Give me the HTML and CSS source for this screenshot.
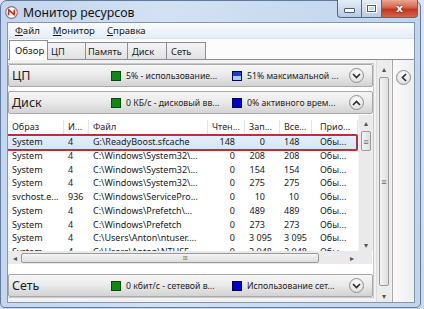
FILE: index.html
```html
<!DOCTYPE html>
<html lang="ru">
<head>
  <meta charset="UTF-8">
  <title>Монитор ресурсов</title>
  <link rel="stylesheet" href="styles.css">
</head>
<body>
  <div class="window">
    <div class="titlebar">
      <span class="app-icon">
        <svg width="13" height="13" viewBox="0 0 13 13">
          <circle cx="6.5" cy="6.5" r="5.8" fill="#fff" stroke="#7b7b7b" stroke-width="1.2"/>
          <path d="M3.4 9.2 L3.8 4 L9 8.6 L9.4 3.6" fill="none" stroke="#d02a20" stroke-width="1.6"/>
        </svg>
      </span>
      <span class="title">Монитор ресурсов</span>
      <div class="caption-btns">
        <span class="cap cap-min"><i></i></span>
        <span class="cap cap-max"><i></i></span>
        <span class="cap cap-close">x</span>
      </div>
    </div>

    <div class="client">
      <div class="menubar">
        <span><u>Ф</u>айл</span>
        <span><u>М</u>онитор</span>
        <span><u>С</u>правка</span>
      </div>

      <div class="tabs">
        <span class="tab active">Обзор</span>
        <span class="tab">ЦП</span>
        <span class="tab">Память</span>
        <span class="tab">Диск</span>
        <span class="tab">Сеть</span>
      </div>

      <div class="pane">
        <div class="main">
          <div class="section-head">
            <span class="sec-title">ЦП</span>
            <span class="ind"><i class="sq green"></i>5% - использование...</span>
            <span class="ind"><i class="sq blue half"></i>51% максимальной ...</span>
            <span class="round-btn"><svg width="9" height="6" viewBox="0 0 9 6"><path d="M1 1 L4.5 4.5 L8 1" fill="none" stroke="#2b2b2b" stroke-width="1.6"/></svg></span>
          </div>

          <div class="section-head">
            <span class="sec-title">Диск</span>
            <span class="ind"><i class="sq green"></i>0 КБ/с - дисковый вв...</span>
            <span class="ind"><i class="sq blue"></i>0% активного врем...</span>
            <span class="round-btn"><svg width="9" height="6" viewBox="0 0 9 6"><path d="M1 5 L4.5 1.5 L8 5" fill="none" stroke="#2b2b2b" stroke-width="1.6"/></svg></span>
          </div>

          <div class="grid-wrap">
            <div class="grid">
              <div class="row head">
                <span>Образ</span><span>И...</span><span class="sorted">Файл</span><span>Чтен...</span><span>Зап...</span><span>Все...</span><span class="prio">Прио...</span>
              </div>
              <div class="row selected">
                <span>System</span><span>4</span><span>G:\ReadyBoost.sfcache</span><span class="n1">148</span><span class="n2">0</span><span class="n3">148</span><span class="prio">Обы...</span>
              </div>
              <div class="row">
                <span>System</span><span>4</span><span>C:\Windows\System32\...</span><span class="n1">0</span><span class="n2">208</span><span class="n3">208</span><span class="prio">Обы...</span>
              </div>
              <div class="row">
                <span>System</span><span>4</span><span>C:\Windows\System32\...</span><span class="n1">0</span><span class="n2">154</span><span class="n3">154</span><span class="prio">Обы...</span>
              </div>
              <div class="row">
                <span>System</span><span>4</span><span>C:\Windows\System32\...</span><span class="n1">0</span><span class="n2">275</span><span class="n3">275</span><span class="prio">Обы...</span>
              </div>
              <div class="row">
                <span>svchost.e...</span><span>936</span><span>C:\Windows\ServicePro...</span><span class="n1">0</span><span class="n2">10</span><span class="n3">10</span><span class="prio">Обы...</span>
              </div>
              <div class="row">
                <span>System</span><span>4</span><span>C:\Windows\Prefetch\...</span><span class="n1">0</span><span class="n2">489</span><span class="n3">489</span><span class="prio">Обы...</span>
              </div>
              <div class="row">
                <span>System</span><span>4</span><span>C:\Windows\Prefetch</span><span class="n1">0</span><span class="n2">273</span><span class="n3">273</span><span class="prio">Обы...</span>
              </div>
              <div class="row">
                <span>System</span><span>4</span><span>C:\Users\Anton\ntuser....</span><span class="n1">0</span><span class="n2">3 095</span><span class="n3">3 095</span><span class="prio">Обы...</span>
              </div>
              <div class="row part">
                <span>System</span><span>4</span><span>C:\Users\Anton\NTUSE...</span><span class="n1">0</span><span class="n2">2 048</span><span class="n3">2 048</span><span class="prio">Обы...</span>
              </div>
              <div class="mark"></div>
            </div>
            <div class="vscroll inner">
              <span class="arr">&#9652;</span>
              <span class="thumb small"><b>&#8801;</b></span>
              <span class="track"></span>
              <span class="arr">&#9662;</span>
            </div>
          </div>

          <div class="hscroll-row">
            <div class="hscroll">
              <span class="arr">&#9666;</span>
              <span class="hthumb"><b>III</b></span>
              <span class="arr">&#9656;</span>
            </div>
            <span class="corner"></span>
          </div>

          <div class="section-head net">
            <span class="sec-title">Сеть</span>
            <span class="ind"><i class="sq green"></i>0 кбит/с - сетевой в...</span>
            <span class="ind"><i class="sq blue"></i>Использование сет...</span>
            <span class="round-btn"><svg width="9" height="6" viewBox="0 0 9 6"><path d="M1 1 L4.5 4.5 L8 1" fill="none" stroke="#2b2b2b" stroke-width="1.6"/></svg></span>
          </div>
        </div>

        <div class="vscroll outer">
          <span class="arr">&#9652;</span>
          <span class="thumb big"><b>&#8801;</b></span>
          <span class="arr">&#9662;</span>
        </div>

        <div class="side">
          <span class="round-btn"><svg width="6" height="9" viewBox="0 0 6 9"><path d="M5 1 L1.5 4.5 L5 8" fill="none" stroke="#2b2b2b" stroke-width="1.6"/></svg></span>
        </div>
      </div>
    </div>
  </div>
</body>
</html>
```

FILE: styles.css
```css
:root {
  --frame: #b9cfea;
  --line: #a0a0a0;
  --text: #1a1a1a;
}
html, body {
  margin: 0;
  width: 424px;
  height: 309px;
  overflow: hidden;
}
body {
  background: linear-gradient(#dce6f2, #c9d8ea);
  font-family: "Noto Sans", "Open Sans", sans-serif;
  color: var(--text);
}

/* окно */
.window {
  width: 421px; height: 308px;
  box-sizing: border-box;
  border: 1px solid #617a9c;
  border-radius: 7px 7px 5px 5px;
  background: linear-gradient(90deg, #c3d6ee, #d3e1f3 40%, #c0d4ec);
  display: flex; flex-direction: column;
  position: relative;
}
.titlebar {
  height: 24px;
  display: flex; align-items: center;
  padding-left: 4px;
  position: relative;
}
.app-icon { display: flex; margin-right: 5px; margin-top: 1px; }
.title { font-size: 12.3px; color: #111; margin-top: 1px; }
.caption-btns {
  position: absolute; top: -1px; right: 2px;
  display: flex;
}
.cap {
  height: 18px; box-sizing: border-box;
  border: 1px solid #53698a; border-top: none;
  display: flex; align-items: center; justify-content: center;
}
.cap-min, .cap-max {
  width: 20px;
  background: linear-gradient(#e6eef9, #cfdced 50%, #b7cbe5);
  border-right: none;
}
.cap-min { width: 24px; border-radius: 0 0 0 4px; }
.cap-min i { width: 9px; height: 3px; background: #fff; border: 1px solid #4d5e76; border-radius: 1px; margin-top: 4px; }
.cap-max i { width: 7px; height: 5px; border: 1px solid #4d5e76; box-shadow: inset 0 0 0 1px #fff, 0 0 0 1px #fff; }
.cap-close {
  width: 37px;
  background: linear-gradient(#e9a894, #d4614a 45%, #c2351e 55%, #d2664a);
  border-radius: 0 0 4px 0;
  color: #fff; font-weight: bold; font-size: 11px;
  font-family: "DejaVu Sans", sans-serif;
  text-shadow: 0 0 2px #6b1a0c;
}

.client {
  flex: 1;
  margin: 0 5px 4px 6px;
  border: 1px solid #8295b3;
  background: #fff;
  display: flex; flex-direction: column;
}
.menubar {
  height: 15px;
  display: flex; align-items: center;
  padding-left: 7px;
  font-size: 9.6px;
  background: linear-gradient(#fbfcfe, #e5edf7);
  border-bottom: 1px solid #dae3ef;
}
.menubar span:nth-child(2) { margin-left: 13px; }
.menubar span:nth-child(3) { margin-left: 12px; }
.menubar u { text-decoration-thickness: 1px; text-underline-offset: 1px; }

.tabs {
  height: 20px;
  display: flex; align-items: flex-end;
  padding-left: 1px;
  background: #fcfcfc;
}
.tab {
  flex-shrink: 0;
  height: 17px; box-sizing: border-box;
  border: 1px solid #8b8e96; border-bottom: none; border-left: none;
  background: linear-gradient(#f4f4f4, #e2e2e2);
  font-size: 9.3px;
  display: flex; align-items: center;
  padding-left: 3px;
  width: 39px;
}
.tab:nth-child(2) { width: 38px; }
.tab:nth-child(3) { width: 42px; padding-left: 2px; }
.tab:nth-child(4) { padding-left: 4px; }
.tab:nth-child(5) { padding-left: 4px; }
.tab.active {
  height: 20px;
  background: #fff;
  border-left: 1px solid #8b8e96;
  margin-bottom: -1px;
  position: relative; z-index: 1;
  font-size: 9.6px;
  padding-left: 5px;
}

.pane {
  flex: 1;
  border-top: 1px solid #8b8e96;
  background: #f2f2f2;
  display: flex;
  padding: 3px 0 4px 0;
}
.main {
  width: 365px;
  display: flex; flex-direction: column;
  background: #fff;
  border: 1px solid #c9c9c9; border-left: none;
}

/* заголовки секций */
.section-head {
  height: 23px; box-sizing: border-box;
  border: 1px solid #a9a9a9;
  border-radius: 2px;
  background: linear-gradient(#f6f6f6, #ebebeb 45%, #d3d3d3);
  display: flex; align-items: center;
  padding-left: 3px;
  margin-bottom: 4px;
  font-size: 8.7px;
}
.section-head.net { margin: 10px 0 0; }
.sec-title { width: 99px; font-size: 12.5px; color: #1e1e1e; }
.ind { width: 121px; display: flex; align-items: center; white-space: nowrap; color: #1f1f1f; }
.ind + .ind { width: 114px; }
.sq { width: 8px; height: 8px; margin-right: 5px; border: 1px solid #2f2f2f; }
.sq.green { background: #0c8a16; border-color: #064a0b; }
.sq.blue { background: #0000c8; border-color: #000060; }
.sq.half { background: linear-gradient(#1e3fd0 50%, #a8cdf4 50%); }
.round-btn {
  width: 15px; height: 15px; box-sizing: border-box;
  border: 1px solid #8e8e8e; border-radius: 50%;
  background: radial-gradient(circle at 50% 30%, #ffffff, #e4e4e4 70%, #cfcfcf);
  display: flex; align-items: center; justify-content: center;
}
.section-head .round-btn { margin-left: auto; margin-right: 8px; }

/* таблица */
.grid-wrap { display: flex; height: 136px; margin-top: -3px; }
.grid { width: 350px; overflow: hidden; position: relative; }
.row {
  display: grid;
  grid-template-columns: 56px 25px 119px 37px 35px 32px 46px;
  height: 13.75px;
  font-size: 9px;
  line-height: 13.75px;
  white-space: nowrap;
}
.row span { padding-left: 4px; overflow: hidden; }
.row.head {
  height: 20px;
  line-height: 14px;
  padding-top: 5px; box-sizing: border-box;
  color: #2a2a2a;
}
.row.head span { border-right: 1px solid #e3e3e3; }
.row.head .sorted { position: relative; }
.row.head .sorted::before {
  content: ""; position: absolute; left: 54px; top: -4px;
  border: 3px solid transparent; border-top: 3px solid #93a9c4; border-bottom: none;
}
.row .prio { padding-left: 8px; }
.row .n1, .row .n2, .row .n3 { text-align: right; }
.row .n1 { padding-right: 10px; }
.row .n2 { padding-right: 15px; }
.row .n3 { padding-right: 13px; }
.row.selected { background: linear-gradient(#e3effc, #d4e6fa); }
.row.part { height: 6px; line-height: 13.75px; overflow: hidden; }
.mark {
  position: absolute; left: -2px; top: 19px;
  width: 352px; height: 17px; box-sizing: border-box;
  border: 2px solid #c22b38; border-radius: 2px;
}

/* полосы прокрутки */
.vscroll {
  width: 14px;
  background: #eaeaea;
  display: flex; flex-direction: column; align-items: center;
  font-size: 8px; color: #555;
}
.vscroll .arr { height: 12px; line-height: 12px; }
.vscroll.inner { border-left: 1px solid #f4f4f4; padding-top: 2px; }
.vscroll .track { flex: 1; }
.thumb {
  width: 10px; box-sizing: border-box;
  border: 1px solid #9a9a9a; border-radius: 2px;
  background: linear-gradient(90deg, #f4f4f4, #dedede);
  display: flex; align-items: center; justify-content: center;
  font-size: 9px; color: #666;
}
.thumb b { font-weight: normal; }
.thumb.small { height: 20px; margin-top: 2px; }
.vscroll.outer {
  margin: -3px 1px -4px 2px;
  width: 14px;
  padding-top: 3px;
  background: #ececec;
  border-left: 1px solid #dcdcdc;
}
.thumb.big { flex: 1; margin: 2px 0 4px; }

.hscroll-row { display: flex; height: 13px; }
.hscroll {
  width: 350px;
  background: #eaeaea;
  display: flex; align-items: center;
  font-size: 8px; color: #555;
}
.hscroll .arr { width: 13px; text-align: center; }
.hthumb {
  width: 298px; height: 10px; box-sizing: border-box;
  border: 1px solid #9a9a9a; border-radius: 2px;
  background: linear-gradient(#f4f4f4, #dedede);
  display: flex; align-items: center; justify-content: center;
  font-size: 6px; color: #777;
  margin-right: 26px;
}
.hthumb b { font-weight: normal; margin-left: 30px; letter-spacing: -0.5px; }
.corner { width: 14px; background: #eaeaea; }

.side {
  flex: 1;
  margin: -3px 0 -4px 0;
  border-left: 1px solid #a9a9a9;
  background: linear-gradient(90deg, #fafafa, #eeeeee);
  display: flex; justify-content: center;
  padding-top: 10px;
}
```
